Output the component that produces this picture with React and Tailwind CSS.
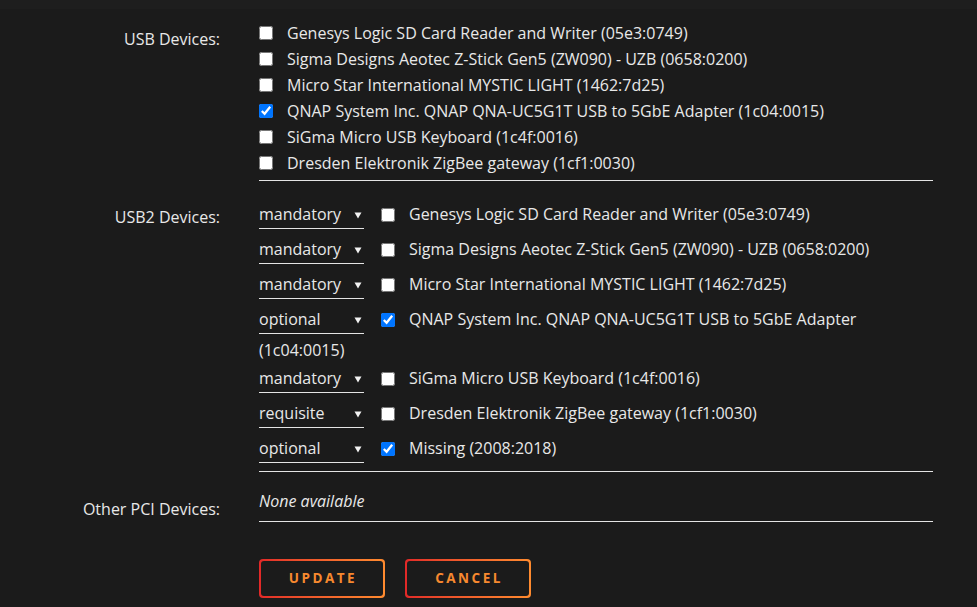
const usbDevices = [
  { name: "Genesys Logic SD Card Reader and Writer (05e3:0749)", checked: false },
  { name: "Sigma Designs Aeotec Z-Stick Gen5 (ZW090) - UZB (0658:0200)", checked: false },
  { name: "Micro Star International MYSTIC LIGHT (1462:7d25)", checked: false },
  { name: "QNAP System Inc. QNAP QNA-UC5G1T USB to 5GbE Adapter (1c04:0015)", checked: true },
  { name: "SiGma Micro USB Keyboard (1c4f:0016)", checked: false },
  { name: "Dresden Elektronik ZigBee gateway (1cf1:0030)", checked: false },
];

const usb2Devices = [
  { mode: "mandatory", name: "Genesys Logic SD Card Reader and Writer (05e3:0749)", checked: false },
  { mode: "mandatory", name: "Sigma Designs Aeotec Z-Stick Gen5 (ZW090) - UZB (0658:0200)", checked: false },
  { mode: "mandatory", name: "Micro Star International MYSTIC LIGHT (1462:7d25)", checked: false },
  { mode: "optional", name: "QNAP System Inc. QNAP QNA-UC5G1T USB to 5GbE Adapter (1c04:0015)", checked: true },
  { mode: "mandatory", name: "SiGma Micro USB Keyboard (1c4f:0016)", checked: false },
  { mode: "requisite", name: "Dresden Elektronik ZigBee gateway (1cf1:0030)", checked: false },
  { mode: "optional", name: "Missing (2008:2018)", checked: true },
];

function ModeSelect({ value }) {
  return (
    <span className="inline-flex items-center justify-between w-[105px] h-[31px] pt-[1px] border-b border-[#e4e4e4] mb-[4px] mr-[17px]">
      <span>{value}</span>
      <svg width="8" height="7" viewBox="0 0 8 7" className="mr-[2px] mt-[3px]">
        <path d="M0.5 0.5 H7.5 L4 6.5 Z" fill="#f2f2f2" />
      </svg>
    </span>
  );
}

function GradientButton({ children }) {
  return (
    <button className="w-[126px] h-[39px] rounded-[4px] p-[2px] bg-gradient-to-r from-[#e22828] to-[#ff8b2f]">
      <span className="flex items-center justify-center w-full h-full rounded-[3px] bg-[#1b1b1b] text-[#f7892f] text-[13.5px] font-bold uppercase tracking-[2.5px] pl-[2px]">
        {children}
      </span>
    </button>
  );
}

export default function App() {
  return (
    <div className="min-h-[607px] bg-[#1b1b1b] text-[#e8e8e8] text-[16px] font-medium font-['Open_Sans',sans-serif]">
      <div className="h-[9px] bg-[#1e1e1e]" />

      {/* USB Devices */}
      <div className="grid grid-cols-[220px_674px] gap-x-[39px] pt-[11px]">
        <div className="text-right leading-[26px] pt-[6px]">USB Devices:</div>
        <div className="border-b border-[#e4e4e4] pb-[4px]">
          {usbDevices.map((d) => (
            <label key={d.name} className="flex items-center h-[26px]">
              <input type="checkbox" defaultChecked={d.checked} className="m-0 mr-[14px] w-[14px] h-[14px]" />
              <span>{d.name}</span>
            </label>
          ))}
        </div>
      </div>

      {/* USB2 Devices */}
      <div className="grid grid-cols-[220px_674px] gap-x-[39px]">
        <div className="text-right leading-[26px] pt-[23px]">USB2 Devices:</div>
        <div className="border-b border-[#e4e4e4] pt-[17px] pb-[4px] leading-[24px]">
          {usb2Devices.map((d) => (
            <div key={d.name}>
              <ModeSelect value={d.mode} />
              <input type="checkbox" defaultChecked={d.checked} className="m-0 mr-[14px] w-[14px] h-[14px] align-[-2px]" />
              <span>{d.name}</span>
            </div>
          ))}
        </div>
      </div>

      {/* Other PCI Devices */}
      <div className="grid grid-cols-[220px_674px] gap-x-[39px]">
        <div className="text-right leading-[26px] pt-[24px]">Other PCI Devices:</div>
        <div className="border-b border-[#e4e4e4] pt-[16px] pb-[5px] leading-[26px] italic">None available</div>
      </div>

      <div className="grid grid-cols-[220px_674px] gap-x-[39px] pt-[37px]">
        <div />
        <div className="flex gap-[20px]">
          <GradientButton>Update</GradientButton>
          <GradientButton>Cancel</GradientButton>
        </div>
      </div>
    </div>
  );
}
